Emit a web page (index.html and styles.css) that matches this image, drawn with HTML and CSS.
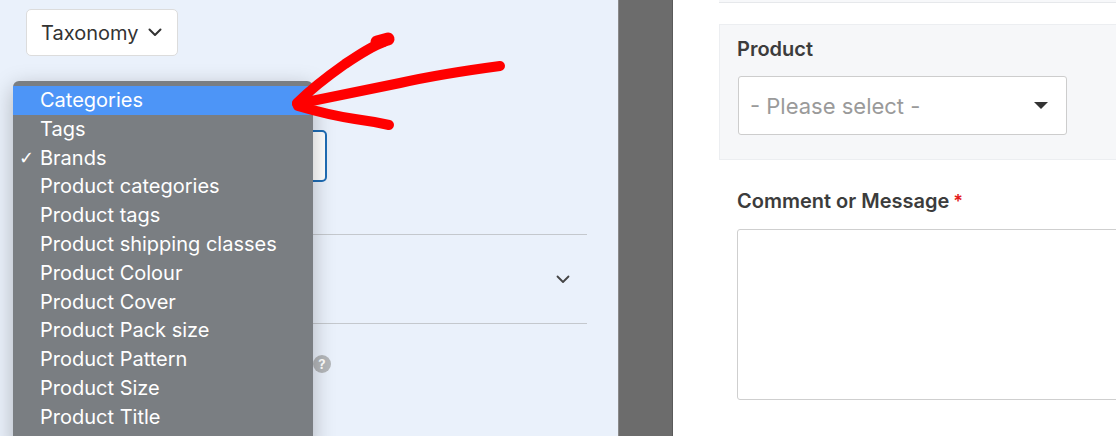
FILE: index.html
```html
<!DOCTYPE html>
<html lang="en">
<head>
    <meta charset="UTF-8">
    <meta name="viewport" content="width=device-width, initial-scale=1.0">
    <title>Taxonomy dropdown</title>
    <link rel="stylesheet" href="styles.css">
</head>
<body>
    <div class="screen">
        <div class="sidebar">
            <button class="tax-btn" type="button">
                Taxonomy
                <svg class="chev" width="14" height="9" viewBox="0 0 14 9"><path d="M1.5 1.5 7 7l5.5-5.5" fill="none" stroke="#333" stroke-width="2" stroke-linecap="round" stroke-linejoin="round"/></svg>
            </button>

            <div class="focus-select"></div>

            <div class="section">
                <svg class="chev" width="14" height="9" viewBox="0 0 14 9"><path d="M1.5 1.5 7 7l5.5-5.5" fill="none" stroke="#444" stroke-width="1.8" stroke-linecap="round" stroke-linejoin="round"/></svg>
            </div>

            <div class="help-row">
                <span class="help">?</span>
            </div>
        </div>

        <div class="divider"></div>

        <div class="form-area">
            <div class="prev-field"></div>

            <div class="field-box">
                <label class="field-label">Product</label>
                <div class="fake-select">
                    <span>- Please select -</span>
                    <span class="caret"></span>
                </div>
            </div>

            <div class="field">
                <label class="field-label">Comment or Message<span class="req">*</span></label>
                <div class="textarea"></div>
            </div>
        </div>

        <!-- native popup menu, open over the sidebar -->
        <ul class="menu">
            <li class="active">Categories</li>
            <li>Tags</li>
            <li><span class="check">✓</span>Brands</li>
            <li>Product categories</li>
            <li>Product tags</li>
            <li>Product shipping classes</li>
            <li>Product Colour</li>
            <li>Product Cover</li>
            <li>Product Pack size</li>
            <li>Product Pattern</li>
            <li>Product Size</li>
            <li>Product Title</li>
        </ul>

        <svg class="arrow" width="1116" height="436" viewBox="0 0 1116 436">
            <g fill="none" stroke="#ff0000" stroke-linecap="round" stroke-linejoin="round">
                <path d="M384 42 C372 46 360 54 345 64 C328 76 310 90 297 103" stroke-width="10"/>
                <path d="M377 42 L388 39" stroke-width="13"/>
                <path d="M500 66 C470 70 440 74 400 83 C360 91 325 98 297 104" stroke-width="10"/>
                <path d="M298 106 C315 111 335 116 355 119 C370 121 380 123 389 125" stroke-width="10"/>
            </g>
        </svg>
    </div>
</body>
</html>
```

FILE: styles.css
```css
* {
    box-sizing: border-box;
}

body {
    margin: 0;
    font-family: Inter, "Noto Sans", sans-serif;
    background: #fff;
}

.screen {
    position: relative;
    display: flex;
    width: 1116px;
    height: 436px;
    overflow: hidden;
}

/* left panel */
.sidebar {
    width: 618px;
    flex: none;
    background: #eaf1fb;
    padding: 9px 31px 0 26px;
}

.tax-btn {
    display: flex;
    align-items: center;
    gap: 10px;
    height: 47px;
    padding: 0 15px 0 14px;
    background: #fff;
    border: 1px solid #dcdcdc;
    border-radius: 5px;
    font-family: inherit;
    font-size: 20px;
    color: #333;
}

.focus-select {
    width: 301px;
    height: 52px;
    margin-top: 74px;
    background: #fff;
    border: 2px solid #1f6db5;
    border-radius: 5px;
}

.section {
    display: flex;
    align-items: center;
    justify-content: flex-end;
    height: 90px;
    margin-top: 52px;
    padding-right: 17px;
    border-top: 1px solid #c4c8cd;
    border-bottom: 1px solid #c4c8cd;
}

.help-row {
    display: flex;
    padding: 31px 0 0 287px;
}

.help {
    display: flex;
    align-items: center;
    justify-content: center;
    width: 18px;
    height: 18px;
    border-radius: 50%;
    background: #b4b7ba;
    color: #fff;
    font-size: 13px;
    font-weight: 700;
}

.divider {
    width: 55px;
    flex: none;
    background: #6c6c6c;
    border-left: 1px solid #8a8a8a;
    border-right: 1px solid #5a5a5a;
}

/* right panel */
.form-area {
    flex: 1;
    padding-left: 46px;
    background: #fff;
}

.prev-field {
    height: 3px;
    background: #f7f8fa;
    border-bottom: 1px solid #e6e8eb;
}

.field-box {
    height: 136px;
    margin-top: 21px;
    padding: 11px 0 0 17px;
    background: #f6f7f9;
    border: 1px solid #eceef1;
    border-right: none;
}

.field-label {
    display: block;
    font-size: 20px;
    font-weight: 600;
    color: #3c3c3c;
    line-height: 26px;
}

.req {
    color: #e41b1b;
    margin-left: 4px;
    font-size: 18px;
}

.fake-select {
    display: flex;
    align-items: center;
    justify-content: space-between;
    width: 329px;
    height: 59px;
    margin: 14px 0 0 1px;
    padding: 0 18px 0 11px;
    background: #fff;
    border: 1px solid #cdcdcd;
    border-radius: 3px;
    font-size: 22px;
    color: #9a9a9a;
}

.caret {
    width: 0;
    height: 0;
    border-left: 7px solid transparent;
    border-right: 7px solid transparent;
    border-top: 7px solid #333;
}

.field {
    padding: 28px 0 0 18px;
}

.textarea {
    width: 420px;
    height: 171px;
    margin-top: 14px;
    border: 1px solid #cfcfcf;
    border-radius: 3px;
}

/* popup menu */
.menu {
    position: absolute;
    left: 13px;
    top: 81px;
    width: 300px;
    height: 370px;
    margin: 0;
    padding: 5px 0 0;
    list-style: none;
    background: #7a7e82;
    border-radius: 6px 6px 0 0;
    box-shadow: 0 6px 22px rgba(0, 0, 0, 0.25);
}

.menu li {
    position: relative;
    height: 28.8px;
    line-height: 28.8px;
    padding-left: 27px;
    font-size: 20px;
    color: #fff;
}

.menu li.active {
    background: #4d95f7;
}

.check {
    position: absolute;
    left: 6px;
    font-family: "DejaVu Sans", sans-serif;
    font-size: 18px;
}

.arrow {
    position: absolute;
    left: 0;
    top: 0;
    pointer-events: none;
}
```
